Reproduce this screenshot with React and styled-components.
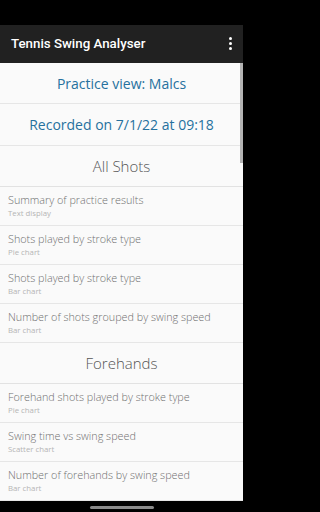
import React from 'react';
import styled, { createGlobalStyle } from 'styled-components';

const GlobalStyle = createGlobalStyle`
  html, body {
    margin: 0;
    padding: 0;
    background: #000;
  }
  * {
    box-sizing: border-box;
  }
`;

const Screen = styled.div`
  width: 243px;
  height: 512px;
  display: flex;
  flex-direction: column;
  overflow: hidden;
  background: #000;
`;

const StatusBar = styled.div`
  height: 25px;
  background: #000;
  flex-shrink: 0;
`;

const AppBar = styled.div`
  height: 38px;
  flex-shrink: 0;
  background: #212121;
  display: flex;
  align-items: center;
  justify-content: space-between;
  padding: 0 11px 1px 11px;
`;

const AppTitle = styled.div`
  color: #fff;
  font-family: Roboto, "Liberation Sans", sans-serif;
  font-weight: 500;
  font-size: 13.3px;
`;

const Kebab = styled.div`
  display: flex;
  flex-direction: column;
  gap: 2px;
`;

const Dot = styled.span`
  width: 3px;
  height: 3px;
  border-radius: 50%;
  background: #fff;
`;

const Content = styled.div`
  position: relative;
  flex: 1;
  background: #fafafa;
  display: flex;
  flex-direction: column;
  font-family: "Open Sans", sans-serif;
`;

const Scrollbar = styled.div`
  position: absolute;
  right: 0;
  top: 0;
  width: 3px;
  height: 100px;
  background: #b3b3b3;
`;

const InfoRow = styled.div`
  height: ${props => props.h}px;
  display: flex;
  align-items: center;
  justify-content: center;
  border-bottom: 1px solid #e6e6e6;
  color: #26719e;
  font-size: 14px;
`;

const SectionHeader = styled.div`
  height: 41px;
  display: flex;
  align-items: center;
  justify-content: center;
  border-bottom: 1px solid #e2e2e2;
  color: #555;
  font-size: 15px;
  font-weight: 300;
`;

const Item = styled.div`
  height: ${props => props.h || 39}px;
  display: flex;
  flex-direction: column;
  justify-content: center;
  padding: 0 8px 2px;
  border-bottom: 1px solid #e6e6e6;
`;

const ItemTitle = styled.div`
  color: #707070;
  font-size: 10.8px;
  font-weight: 300;
  line-height: 15px;
`;

const ItemSub = styled.div`
  color: #b5b5b5;
  font-size: 7.8px;
  font-weight: 400;
  line-height: 11px;
  margin-top: 1px;
`;

const NavBar = styled.div`
  height: 12px;
  flex-shrink: 0;
  background: #000;
  display: flex;
  justify-content: center;
  align-items: center;
`;

const Handle = styled.div`
  width: 64px;
  height: 3px;
  border-radius: 2px;
  background: #8a8a8a;
`;

const sections = [
  {
    title: 'All Shots',
    items: [
      ['Summary of practice results', 'Text display'],
      ['Shots played by stroke type', 'Pie chart'],
      ['Shots played by stroke type', 'Bar chart'],
      ['Number of shots grouped by swing speed', 'Bar chart'],
    ],
  },
  {
    title: 'Forehands',
    items: [
      ['Forehand shots played by stroke type', 'Pie chart'],
      ['Swing time vs swing speed', 'Scatter chart'],
      ['Number of forehands by swing speed', 'Bar chart'],
    ],
  },
];

export default function App() {
  return (
    <>
      <GlobalStyle />
      <Screen>
        <StatusBar />
        <AppBar>
          <AppTitle>Tennis Swing Analyser</AppTitle>
          <Kebab>
            <Dot />
            <Dot />
            <Dot />
          </Kebab>
        </AppBar>
        <Content>
          <Scrollbar />
          <InfoRow h={41}>Practice view: Malcs</InfoRow>
          <InfoRow h={42}>Recorded on 7/1/22 at 09:18</InfoRow>
          {sections.map(section => (
            <React.Fragment key={section.title}>
              <SectionHeader>{section.title}</SectionHeader>
              {section.items.map((item, index) => (
                <Item key={`${section.title}-${index}`}>
                  <ItemTitle>{item[0]}</ItemTitle>
                  <ItemSub>{item[1]}</ItemSub>
                </Item>
              ))}
            </React.Fragment>
          ))}
        </Content>
        <NavBar>
          <Handle />
        </NavBar>
      </Screen>
    </>
  );
}
